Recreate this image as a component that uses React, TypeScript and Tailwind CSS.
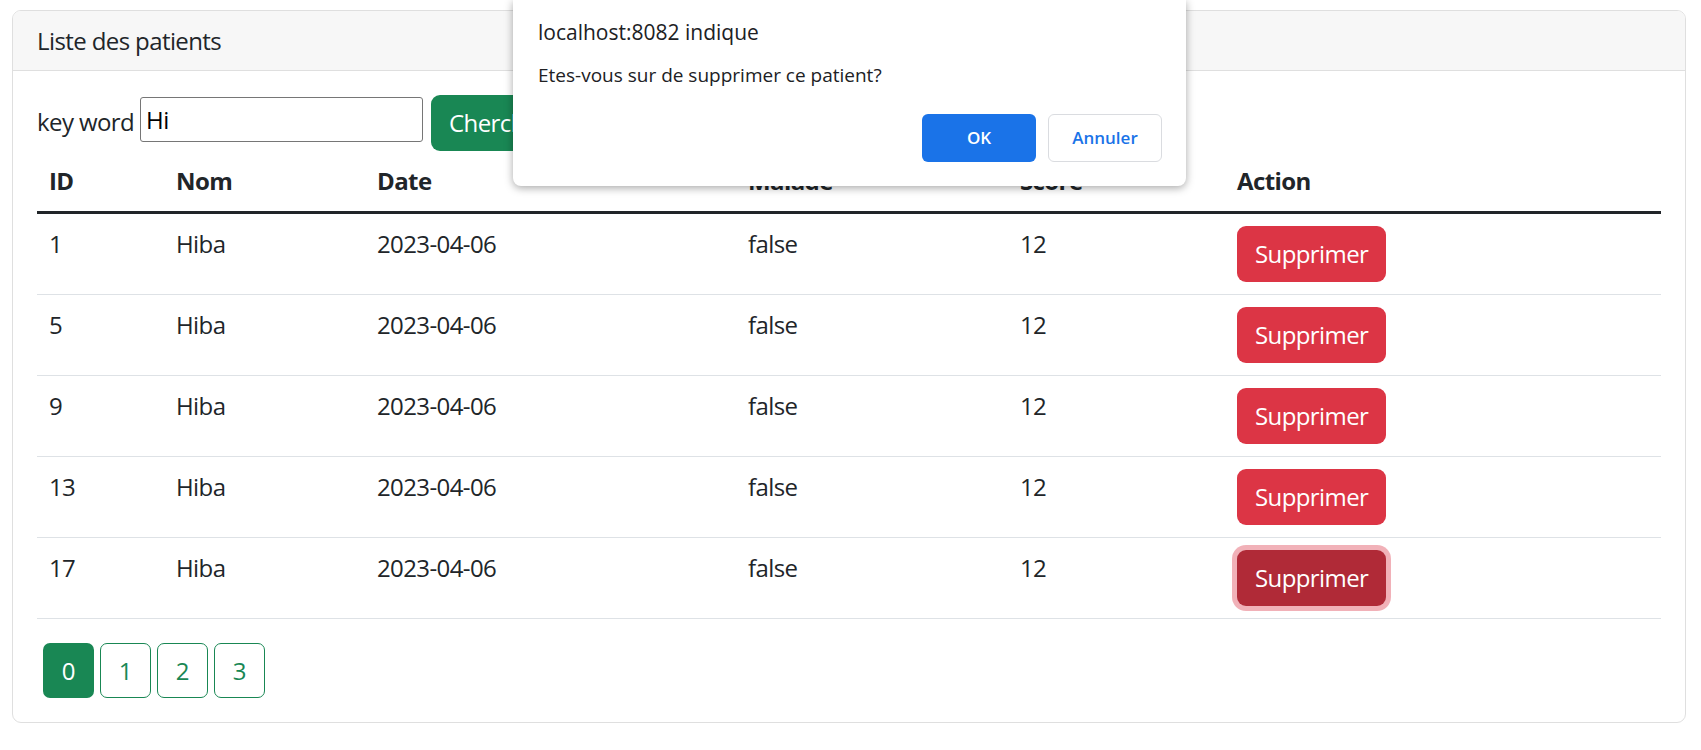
import React from "react";

const patients = [
  { id: 1, nom: "Hiba", date: "2023-04-06", malade: "false", score: 12 },
  { id: 5, nom: "Hiba", date: "2023-04-06", malade: "false", score: 12 },
  { id: 9, nom: "Hiba", date: "2023-04-06", malade: "false", score: 12 },
  { id: 13, nom: "Hiba", date: "2023-04-06", malade: "false", score: 12 },
  { id: 17, nom: "Hiba", date: "2023-04-06", malade: "false", score: 12 },
];

function ConfirmDialog() {
  return (
    <div className="absolute left-[513px] top-0 w-[673px] h-[186px] bg-white rounded-b-[8px] shadow-[0_2px_8px_rgba(0,0,0,0.35)] pl-[25px] pr-[24px] font-['Open_Sans',sans-serif] tracking-normal">
      <div className="pt-[17px] text-[21px] leading-[30px] text-[#202124]">localhost:8082 indique</div>
      <div className="mt-[14px] text-[19px] leading-[28px] text-[#202124]">Etes-vous sur de supprimer ce patient?</div>
      <div className="mt-[25px] flex justify-end gap-[12px]">
        <button className="w-[114px] h-[48px] rounded-[6px] bg-[#1a73e8] text-white text-[17px] font-semibold">OK</button>
        <button className="w-[114px] h-[48px] rounded-[6px] bg-white border border-[#dadce0] text-[#1a73e8] text-[17px] font-semibold">Annuler</button>
      </div>
    </div>
  );
}

export default function App() {
  return (
    <div className="relative w-[1701px] h-[750px] bg-white overflow-hidden pt-[10px] font-['Open_Sans',sans-serif] text-[#212529] text-[24px] leading-[36px] tracking-[-0.6px]">
      <div className="ml-[12px] w-[1674px] border-[1.5px] border-[#dfdfdf] rounded-[9px] overflow-hidden">
        <div className="h-[60px] px-[24px] py-[12px] bg-[#f7f7f7] border-b-[1.5px] border-[#dfdfdf]">Liste des patients</div>
        <div className="p-[24px] pt-[24px]">
          <div className="flex items-start h-[56px]">
            <span className="mt-[9px]">key word</span>
            <input
              defaultValue="Hi"
              className="ml-[6px] mt-[2px] w-[283px] h-[45px] border border-[#767676] rounded-[3px] px-[5px] text-[24px] tracking-[-0.6px] text-black outline-none"
            />
            <button className="ml-[8px] h-[56px] px-[18px] rounded-[9px] bg-[#198754] text-white">Chercher</button>
          </div>
          <table className="w-full border-collapse">
            <thead>
              <tr className="border-b-[3px] border-[#212529]">
                <th className="w-[127px] text-left font-bold p-[12px]">ID</th>
                <th className="w-[201px] text-left font-bold p-[12px]">Nom</th>
                <th className="w-[371px] text-left font-bold p-[12px]">Date</th>
                <th className="w-[272px] text-left font-bold p-[12px]">Malade</th>
                <th className="w-[217px] text-left font-bold p-[12px]">Score</th>
                <th className="text-left font-bold p-[12px]">Action</th>
              </tr>
            </thead>
            <tbody>
              {patients.map((p, i) => (
                <tr key={p.id} className="border-b-[1.5px] border-[#dee2e6]">
                  <td className="p-[12px] align-top">{p.id}</td>
                  <td className="p-[12px] align-top">{p.nom}</td>
                  <td className="p-[12px] align-top">{p.date}</td>
                  <td className="p-[12px] align-top">{p.malade}</td>
                  <td className="p-[12px] align-top">{p.score}</td>
                  <td className="p-[12px] align-top">
                    {i === patients.length - 1 ? (
                      <button className="h-[56px] px-[18px] rounded-[9px] bg-[#b02a37] text-white shadow-[0_0_0_5px_rgba(225,83,97,0.45)]">Supprimer</button>
                    ) : (
                      <button className="h-[56px] px-[18px] rounded-[9px] bg-[#dc3545] text-white">Supprimer</button>
                    )}
                  </td>
                </tr>
              ))}
            </tbody>
          </table>
          <div className="mt-[24px] flex gap-[6.5px] ml-[6px]">
            <button className="w-[50.5px] h-[55px] rounded-[7px] bg-[#198754] text-white">0</button>
            <button className="w-[50.5px] h-[55px] rounded-[7px] border-[1.5px] border-[#198754] text-[#198754]">1</button>
            <button className="w-[50.5px] h-[55px] rounded-[7px] border-[1.5px] border-[#198754] text-[#198754]">2</button>
            <button className="w-[50.5px] h-[55px] rounded-[7px] border-[1.5px] border-[#198754] text-[#198754]">3</button>
          </div>
        </div>
      </div>
      <ConfirmDialog />
    </div>
  );
}
